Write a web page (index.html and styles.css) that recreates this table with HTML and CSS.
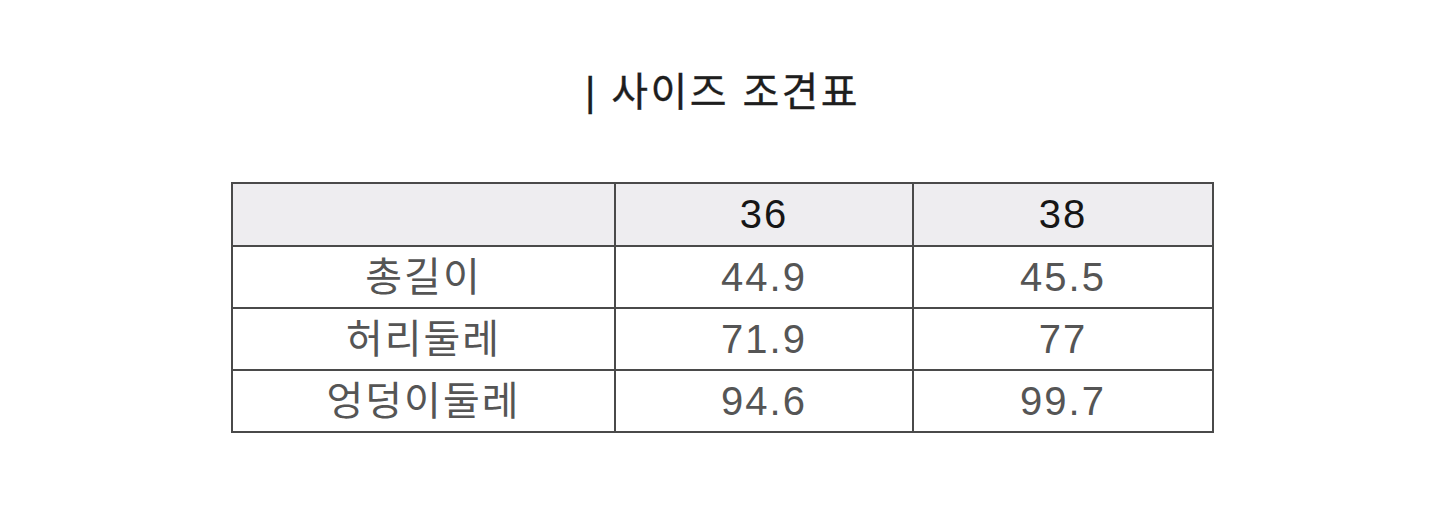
FILE: index.html
```html
<!DOCTYPE html>
<html lang="ko">
<head>
<meta charset="utf-8">
<title>사이즈 조견표</title>
<link rel="stylesheet" href="styles.css">
</head>
<body>
<main class="page">
  <h1 class="title">| 사이즈 조견표</h1>
  <table class="size-table">
    <colgroup>
      <col class="c-label">
      <col class="c-size">
      <col class="c-size2">
    </colgroup>
    <thead>
      <tr><th></th><th>36</th><th>38</th></tr>
    </thead>
    <tbody>
      <tr><td>총길이</td><td>44.9</td><td>45.5</td></tr>
      <tr><td>허리둘레</td><td>71.9</td><td>77</td></tr>
      <tr><td>엉덩이둘레</td><td>94.6</td><td>99.7</td></tr>
    </tbody>
  </table>
</main>
</body>
</html>
```

FILE: styles.css
```css
html, body {
  margin: 0;
  padding: 0;
  background: #ffffff;
}
body {
  font-family: "Liberation Sans", "Noto Sans CJK KR", sans-serif;
  padding-left: 5px;
}
.page {
  width: 981px;
  margin: 0 auto;
  padding-top: 62px;
  display: flex;
  flex-direction: column;
  align-items: center;
}
.title {
  margin: 0;
  font-size: 40px;
  font-weight: 400;
  letter-spacing: 0.06em;
  line-height: 60px;
  color: #1e1e1e;
  -webkit-text-stroke: 0.3px #1e1e1e;
}
.size-table {
  margin-top: 60px;
  width: 981px;
  border-collapse: collapse;
  table-layout: fixed;
  border: 2px solid #4a4a4a;
}
.c-label { width: 383px; }
.c-size { width: 298px; }
.c-size2 { width: 300px; }
.size-table th,
.size-table td {
  border: 2px solid #4a4a4a;
  padding: 0;
  text-align: center;
  font-size: 40px;
  font-weight: 400;
  letter-spacing: 0.05em;
  line-height: 59px;
}
.size-table th {
  background: #eeedf0;
  color: #161616;
  height: 61px;
}
.size-table td {
  color: #555555;
  height: 60px;
}
```
